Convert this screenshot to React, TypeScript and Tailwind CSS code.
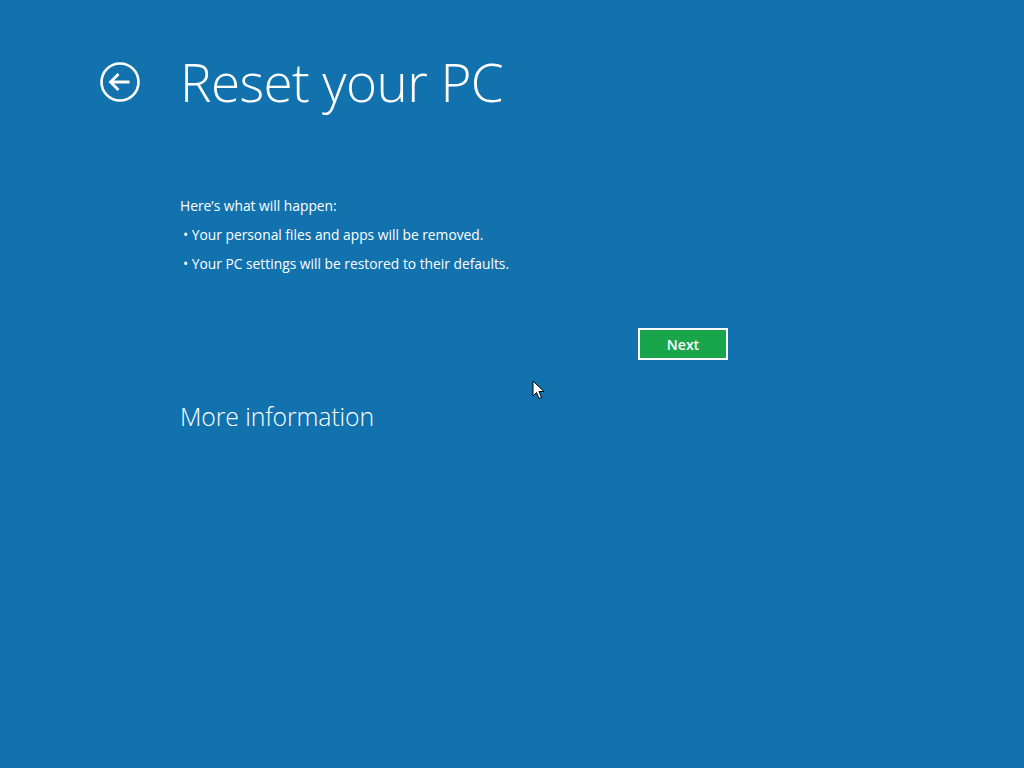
import React from "react";

export default function App() {
  return (
    <div
      className="relative w-[1024px] h-[768px] overflow-hidden bg-[#1172ae] text-white"
      style={{ fontFamily: '"Open Sans", "Noto Sans", sans-serif' }}
    >
      <div className="flex items-center pt-[47px] pl-[99px]">
        <svg width="42" height="42" viewBox="0 0 42 42" className="shrink-0">
          <circle cx="21" cy="21" r="18.5" fill="none" stroke="white" strokeWidth="2.6" />
          <path d="M11.5 21 H30.5 M19.5 13 L11.5 21 L19.5 29" fill="none" stroke="white" strokeWidth="2.8" strokeLinejoin="miter" strokeLinecap="butt" />
        </svg>
        <h1 className="ml-[39px] text-[53px] font-light leading-[70px] tracking-[-0.6px]">Reset your PC</h1>
      </div>

      <div className="pl-[180px] pt-[74px] text-[13.8px] leading-[29px]">
        <p>Here’s what will happen:</p>
        <p className="pl-[3px]">• Your personal files and apps will be removed.</p>
        <p className="pl-[3px]">• Your PC settings will be restored to their defaults.</p>
      </div>

      <div className="flex pl-[638px] pt-[50px]">
        <button className="w-[90px] h-[32px] border-2 border-white bg-[#19a54c] text-white text-[14px] font-semibold">
          Next
        </button>
      </div>

      <div className="pl-[180px] pt-[38px]">
        <p className="text-[24.8px] font-light leading-[36px] tracking-[-0.1px]">More information</p>
      </div>

      <svg
        className="absolute left-[532px] top-[380px]"
        width="14"
        height="21"
        viewBox="0 0 14 21"
      >
        <path d="M1 1 L1 16 L4.5 12.5 L7 18.5 L9.5 17.5 L7 11.5 L12 11.5 Z" fill="white" stroke="black" strokeWidth="1" strokeLinejoin="round" />
      </svg>
    </div>
  );
}
